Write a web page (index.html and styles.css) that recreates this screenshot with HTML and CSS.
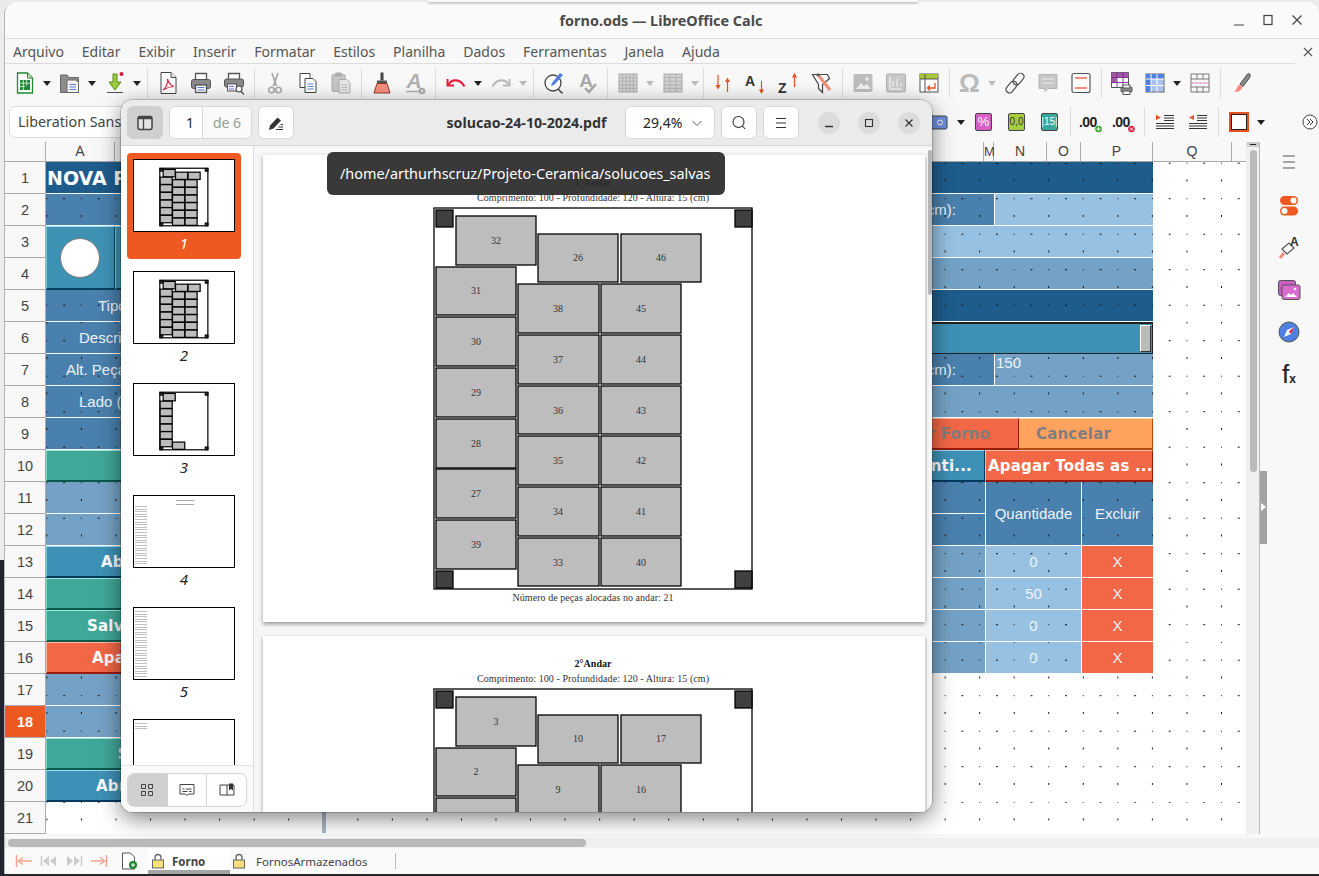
FILE: index.html
```html
<!DOCTYPE html>
<html lang="pt-BR">
<head>
    <meta charset="UTF-8">
    <meta name="viewport" content="width=device-width, initial-scale=1.0">
    <title>forno.ods - LibreOffice Calc</title>
    <link rel="stylesheet" href="styles.css">
</head>
<body>

    <!-- shared drawing of one kiln floor -->
    <svg class="defs" aria-hidden="true">
        <defs>
            <g id="frame"><rect x="171" y="53" width="318" height="381" fill="#fff"/>
                <rect x="173" y="55" width="17" height="17" fill="#404040"/><rect x="472" y="55" width="17" height="17" fill="#404040"/>
                <rect x="173" y="416" width="17" height="17" fill="#404040"/><rect x="472" y="416" width="17" height="17" fill="#404040"/>
            </g>
            <g id="left-col" fill="#bdbdbd">
                <rect x="193" y="61" width="80" height="49"/>
                <rect x="173" y="112" width="80" height="48"/><rect x="173" y="162" width="80" height="49"/>
                <rect x="173" y="213" width="80" height="49"/><rect x="173" y="264" width="80" height="49"/>
                <rect x="173" y="314" width="80" height="49"/><rect x="173" y="365" width="80" height="49"/>
            </g>
            <g id="floor">
                <use href="#frame"/><use href="#left-col"/>
                <g fill="#bdbdbd">
                    <rect x="275" y="79" width="80" height="48"/><rect x="358" y="79" width="80" height="48"/>
                    <rect x="255" y="129" width="81" height="49"/><rect x="338" y="129" width="80" height="49"/>
                    <rect x="255" y="180" width="81" height="49"/><rect x="338" y="180" width="80" height="49"/>
                    <rect x="255" y="231" width="81" height="48"/><rect x="338" y="231" width="80" height="48"/>
                    <rect x="255" y="281" width="81" height="49"/><rect x="338" y="281" width="80" height="49"/>
                    <rect x="255" y="332" width="81" height="49"/><rect x="338" y="332" width="80" height="49"/>
                    <rect x="255" y="383" width="81" height="48"/><rect x="338" y="383" width="80" height="48"/>
                </g>
            </g>
        </defs>
    </svg>

    <!-- Calc window -->
    <div class="calc">
        <div class="titlebar">
            <span class="titlebar-text">forno.ods — LibreOffice Calc</span>
            <div class="win-btns">
                <svg class="icon-sm" viewBox="0 0 16 16"><path d="M3 13h10" stroke="#444" stroke-width="1.2"/></svg>
                <svg class="icon-sm" viewBox="0 0 16 16"><rect x="4" y="3.5" width="8" height="9" fill="none" stroke="#444" stroke-width="1.2"/></svg>
                <svg class="icon-sm" viewBox="0 0 16 16"><path d="M3.5 3.5l9 9M12.5 3.5l-9 9" stroke="#444" stroke-width="1.2"/></svg>
            </div>
        </div>

        <div class="menubar">
            <span>Arquivo</span><span>Editar</span><span>Exibir</span><span>Inserir</span><span>Formatar</span><span>Estilos</span><span>Planilha</span><span>Dados</span><span>Ferramentas</span><span>Janela</span><span>Ajuda</span>
            <svg class="menu-close" viewBox="0 0 12 12"><path d="M2 2l8 8M10 2l-8 8" stroke="#555" stroke-width="1.1"/></svg>
        </div>

        <!-- Standard toolbar -->
        <div class="toolbar">
            <div class="tb"><svg viewBox="0 0 24 24"><path d="M4.5 2h10l5 5v15h-15z" fill="#fff" stroke="#1c8b2f" stroke-width="1.3"/><path d="M14.500 2v5h5" fill="#bfe3c5" stroke="#1c8b2f"/><path d="M7 9h10v10H7z" fill="#1c8b2f"/><path d="M7 12.200h10M7 15.500h10M10.300 9v10M13.600 9v10" stroke="#e6f5e8" stroke-width=".8"/><path d="M12 15h5v4h-5z" fill="#1c8b2f"/></svg></div>
            <div class="drop"></div>
            <div class="tb"><svg viewBox="0 0 24 24"><path d="M2.500 4h6.500l2 2.500h9.500v15h-18z" fill="#8d8d8d" stroke="#666"/><path d="M9 9h9l2.500 2.500v10H9z" fill="#f2f2f2" stroke="#666"/><path d="M11.500 13.500h6.500M11.500 16h6.500M11.500 18.500h6.500" stroke="#5b7fd6"/></svg></div>
            <div class="drop"></div>
            <div class="tb"><svg viewBox="0 0 24 24"><path d="M10 3h4v8h4l-6 8-6-8h4z" fill="#9ccc3c" stroke="#5a8a1a"/><path d="M4 21.500h16" stroke="#555" stroke-width="1.200"/><circle cx="18.500" cy="3" r="2" fill="#d8143c"/></svg></div>
            <div class="drop"></div>
            <div class="sep"></div>
            <div class="tb"><svg viewBox="0 0 24 24"><path d="M5 1.500h10l5 5v16H5z" fill="#fff" stroke="#444"/><path d="M15 1.500v5h5" fill="#eee" stroke="#444"/><path d="M7 19c3-2 5-7 4.500-11 1 4 3 6.500 6.500 7.500-4 0-7 1-11 3.500z" fill="none" stroke="#e0344f" stroke-width="1.200"/></svg></div>
            <div class="tb"><svg viewBox="0 0 24 24"><path d="M6.500 9V2.500h11V9" fill="#fff" stroke="#555" stroke-width="1.300"/><rect x="2.500" y="8.500" width="19" height="9" rx="2" fill="#8a8a8a" stroke="#555"/><rect x="6.500" y="14" width="11" height="7.500" fill="#fff" stroke="#555" stroke-width="1.300"/><path d="M8.500 16.500h7M8.500 19h7" stroke="#5b7fd6"/></svg></div>
            <div class="tb"><svg viewBox="0 0 24 24"><path d="M6.500 8V2.500h11V8" fill="#fff" stroke="#555" stroke-width="1.300"/><rect x="2.500" y="8" width="19" height="8" rx="2" fill="#8a8a8a" stroke="#555"/><rect x="5.500" y="13" width="9" height="7" fill="#fff" stroke="#555"/><path d="M7 15.500h5M7 18h5" stroke="#5b7fd6"/><circle cx="17" cy="18" r="3" fill="#fff" stroke="#555" stroke-width="1.200"/><path d="M19 20.500l3 3" stroke="#555" stroke-width="1.300"/></svg></div>
            <div class="sep"></div>
            <div class="tb"><svg viewBox="0 0 24 24"><path d="M9 2l4.500 13M15 2l-4.500 13" stroke="#aaa" stroke-width="1.800"/><circle cx="8.500" cy="19" r="2.700" fill="none" stroke="#aaa" stroke-width="1.600"/><circle cx="15.500" cy="19" r="2.700" fill="none" stroke="#aaa" stroke-width="1.600"/></svg></div>
            <div class="tb"><svg viewBox="0 0 24 24"><path d="M4 2.500h10v14H4z" fill="#fff" stroke="#444"/><path d="M9 7.500h8l3 3v11H9z" fill="#fff" stroke="#444"/><path d="M11.500 13h6M11.500 15.500h6M11.500 18h6" stroke="#5b7fd6"/></svg></div>
            <div class="tb"><svg viewBox="0 0 24 24"><rect x="3" y="3.500" width="13" height="17" rx="1.500" fill="#c5c5c5" stroke="#aaa"/><rect x="6.500" y="1.500" width="6" height="4" fill="#aaa"/><path d="M10 8.500h8l3 3v10.500H10z" fill="#e6e6e6" stroke="#aaa"/><path d="M12.500 14h6M12.500 16.500h6M12.500 19h6" stroke="#bbb"/></svg></div>
            <div class="sep"></div>
            <div class="tb"><svg viewBox="0 0 24 24"><path d="M10.500 1.500h3v8h-3z" fill="#444"/><path d="M7 9.500h10v3H7z" fill="#555"/><path d="M7 12.500h10l3 9.500H4z" fill="#f58f7c" stroke="#8a3a2b"/></svg></div>
            <div class="tb"><svg viewBox="0 0 24 24"><text x="11" y="17" class="glyph-a glyph-it" fill="#b0b0b0">A</text><path d="M3 20.500h14" stroke="#b0b0b0" stroke-width="1.500"/><circle cx="19" cy="20" r="3.300" fill="#aaa"/><path d="M17.700 18.700l2.600 2.600M20.300 18.700l-2.600 2.600" stroke="#fff" stroke-width=".8"/></svg></div>
            <div class="sep"></div>
            <div class="tb"><svg viewBox="0 0 24 24"><path d="M3.500 8v6.500H10" fill="none" stroke="#e8203c" stroke-width="2"/><path d="M4 14C8 7.500 16 7.500 20.500 15.500" fill="none" stroke="#e8203c" stroke-width="2.200"/></svg></div>
            <div class="drop"></div>
            <div class="tb"><svg viewBox="0 0 24 24"><path d="M20.500 8v6.500H14" fill="none" stroke="#bbb" stroke-width="2"/><path d="M20 14C16 7.500 8 7.500 3.500 15.500" fill="none" stroke="#bbb" stroke-width="2.200"/></svg></div>
            <div class="drop off"></div>
            <div class="sep"></div>
            <div class="tb"><svg viewBox="0 0 24 24"><circle cx="11" cy="12" r="8" fill="#fff" stroke="#444" stroke-width="1.300"/><path d="M16 18l4.500 4.500" stroke="#444" stroke-width="1.600"/><path d="M10 12l8-10 3 2-9 10-3 1z" fill="#4f7fe0"/></svg></div>
            <div class="tb"><svg viewBox="0 0 24 24"><text x="11" y="16" class="glyph-a" fill="#a8a8a8">A</text><path d="M10 17l4 4 7-8" fill="none" stroke="#a8a8a8" stroke-width="2.400"/></svg></div>
            <div class="sep"></div>
            <div class="tb"><svg viewBox="0 0 24 24"><rect x="3" y="3" width="18" height="18" fill="#d2d2d2" stroke="#aaa"/><path d="M6.600 3v18M10.200 3v18M13.800 3v18M17.400 3v18M3 6.600h18M3 10.200h18M3 13.800h18M3 17.400h18" stroke="#aaa" stroke-width=".8"/></svg></div>
            <div class="drop off"></div>
            <div class="tb"><svg viewBox="0 0 24 24"><rect x="3" y="3" width="18" height="18" fill="#d2d2d2" stroke="#aaa"/><path d="M9 3v18M15 3v18M3 6.600h18M3 10.200h18M3 13.800h18M3 17.400h18" stroke="#aaa" stroke-width=".8"/></svg></div>
            <div class="drop off"></div>
            <div class="sep tight"></div>
            <div class="tb"><svg viewBox="0 0 24 24"><path d="M7 4v11M16.500 10v11" stroke="#e8501f" stroke-width="1.200"/><path d="M4.500 14l2.500 4.500 2.500-4.500zM14 11l2.500-4.500 2.500 4.500z" fill="#e8501f"/></svg></div>
            <div class="tb"><svg viewBox="0 0 24 24"><text x="1" y="15" class="glyph-sort" fill="#333">A</text><path d="M17.500 10v10" stroke="#e8501f" stroke-width="1.200"/><path d="M15 18.500l2.500 4.500 2.500-4.500z" fill="#e8501f"/></svg></div>
            <div class="tb"><svg viewBox="0 0 24 24"><text x="1" y="22" class="glyph-sort" fill="#333">Z</text><path d="M17.500 5v11" stroke="#e8501f" stroke-width="1.200"/><path d="M15 6.500l2.500-4.500 2.500 4.500z" fill="#e8501f"/></svg></div>
            <div class="tb"><svg viewBox="0 0 24 24"><path d="M2.500 3.500h15l2 4-7 6v8l-4-4v-4z" fill="#fff" stroke="#444" stroke-width="1.200"/><path d="M9 5l11 14" stroke="#f58f7c" stroke-width="3"/><path d="M9 5l-2-2" stroke="#555" stroke-width="2.500"/></svg></div>
            <div class="sep"></div>
            <div class="tb"><svg viewBox="0 0 24 24"><rect x="2.500" y="3" width="19" height="18" rx="1.500" fill="#bdbdbd"/><path d="M5 18l5-6 3 3 3-2 4 5z" fill="#eee"/><circle cx="16" cy="8" r="1.800" fill="#eee"/></svg></div>
            <div class="tb"><svg viewBox="0 0 24 24"><rect x="2.500" y="3" width="19" height="18" rx="1.500" fill="#c9c9c9" stroke="#b0b0b0"/><path d="M6 6v12h12M9 16v-6M13 16v-8M17 16v-4" stroke="#eee" stroke-width="1.300" fill="none"/></svg></div>
            <div class="tb"><svg viewBox="0 0 24 24"><rect x="3" y="3" width="18" height="18" fill="#fff" stroke="#555"/><path d="M3 3h18v5H3z" fill="#a5c639"/><path d="M8 3v18M3 8h18" stroke="#555"/><path d="M18 12v5h-7m2-2.500L10.500 17l2.500 2.500" fill="none" stroke="#e8501f" stroke-width="1.300"/></svg></div>
            <div class="sep"></div>
            <div class="tb"><span class="omega">Ω</span></div>
            <div class="drop off"></div>
            <div class="tb"><svg viewBox="0 0 24 24"><g fill="none" stroke="#444" stroke-width="1.100"><rect x="12" y="1.500" width="7" height="13" rx="3.500" transform="rotate(40 15.500 8)"/><rect x="5" y="9.500" width="7" height="13" rx="3.500" transform="rotate(40 8.500 16)"/></g></svg></div>
            <div class="tb"><svg viewBox="0 0 24 24"><path d="M3 3.500h18v14H12l-3 3v-3H3z" fill="#c6c6c6" stroke="#b5b5b5"/><path d="M6 8h12M6 12h12" stroke="#eee"/></svg></div>
            <div class="tb"><svg viewBox="0 0 24 24"><rect x="3" y="2.500" width="18" height="19" rx="2" fill="#fff" stroke="#555" stroke-width="1.200"/><path d="M6 7h12M6 17h12" stroke="#f58f7c" stroke-width="2.200"/></svg></div>
            <div class="sep"></div>
            <div class="tb"><svg viewBox="0 0 24 24"><path d="M1.500 1.500h17v15h-17z" fill="#fff" stroke="#555"/><path d="M1.500 1.500h17v5h-17zM1.500 6.500h5v5h-5z" fill="#a05aa8"/><path d="M1.500 6.500h17M1.500 11.500h17M7 1.500v15M13 1.500v15" stroke="#7a2a8a" stroke-width=".9"/><rect x="11" y="16" width="11" height="5" rx="1" fill="#8a8a8a" stroke="#555"/><path d="M13 14h7v3h-7zM13 20h7v3.500h-7z" fill="#fff" stroke="#555"/></svg></div>
            <div class="tb"><svg viewBox="0 0 24 24"><rect x="3" y="3" width="18" height="18" fill="#a9c3f3" stroke="#666"/><path d="M3 3h18v5H3zM3 8h5v13H3z" fill="#4f7fe0"/><path d="M8 3v18M14 3v18M3 8h18M3 14.500h18" stroke="#fff"/></svg></div>
            <div class="drop"></div>
            <div class="tb"><svg viewBox="0 0 24 24"><path d="M3 3h18v18H3zM3 8h18M3 16h18M9 3v5M15 3v5M9 16v5M15 16v5" fill="none" stroke="#777"/><path d="M3 12h18" stroke="#d76cc0" stroke-dasharray="3 1"/></svg></div>
            <div class="sep"></div>
            <div class="tb"><svg viewBox="0 0 24 24"><path d="M20 2.500c2 1 1.500 3 0 5l-6 8-3-2.500 6-8c1-1.500 2-3 3-2.500z" fill="#888" stroke="#555"/><path d="M10.500 13.500l3 2.500c-1 3-4 5-8 5 2-1 2-6 5-7.500z" fill="#f58f7c"/></svg></div>
        </div>

        <!-- Formatting toolbar -->
        <div class="toolbar toolbar-format">
            <div class="font-box">Liberation Sans</div>
            <div class="spacer"></div>
            <div class="tb"><svg viewBox="0 0 24 24"><rect x="-1" y="6" width="21" height="13" rx="1.500" fill="#6d8fdc" stroke="#444"/><circle cx="13" cy="12.500" r="2.500" fill="none" stroke="#fff"/></svg></div>
            <div class="drop"></div>
            <div class="tb"><span class="num-chip chip-pink">%</span></div>
            <div class="tb"><span class="num-chip chip-lime">0,0</span></div>
            <div class="tb"><span class="num-chip chip-teal">|15|</span></div>
            <div class="sep"></div>
            <div class="tb"><svg viewBox="0 0 24 24"><text x="0" y="17" class="glyph-dec">.00</text><circle cx="19.500" cy="19" r="3.300" fill="#3aa82f"/><path d="M17.500 19h4M19.500 17v4" stroke="#fff"/></svg></div>
            <div class="tb"><svg viewBox="0 0 24 24"><text x="0" y="17" class="glyph-dec">.00</text><circle cx="19.500" cy="19" r="3.300" fill="#d8223c"/><path d="M18 17.500l3 3M21 17.500l-3 3" stroke="#fff"/></svg></div>
            <div class="sep"></div>
            <div class="tb"><svg viewBox="0 0 24 24"><path d="M11 5.500h10M11 8h10M11 10.500h10M3 13.500h18M3 16h18M3 18.500h18" stroke="#333"/><path d="M3 5l5 2.500L3 10z" fill="#e8501f"/></svg></div>
            <div class="tb"><svg viewBox="0 0 24 24"><path d="M11 5.500h10M11 8h10M11 10.500h10M3 13.500h18M3 16h18M3 18.500h18" stroke="#333"/><path d="M8 5L3 7.500 8 10z" fill="#e8501f"/></svg></div>
            <div class="sep"></div>
            <div class="tb"><span class="border-chip"></span></div>
            <div class="drop"></div>
            <div class="more"><svg viewBox="0 0 16 16"><circle cx="8" cy="8" r="7" fill="#fff" stroke="#444"/><path d="M5 5l3 3-3 3M8 5l3 3-3 3" fill="none" stroke="#333"/></svg></div>
        </div>

        <div class="workspace">
            <div class="sheet">
                <div class="col-heads">
                    <div></div><div>A</div><div></div><div class="squeeze">M</div><div>N</div><div>O</div><div>P</div><div>Q</div>
                </div>

                <div class="cells">
                    <div class="row-head">1</div>
                    <div class="cell fill-dark a-b title-cell">NOVA PEÇA</div>
                    <div class="cell fill-dark c-g dotted"></div>
                    <div class="cell q dotted"></div>

                    <div class="row-head">2</div>
                    <div class="cell fill-mid a-d dotted label-end">(cm):</div>
                    <div class="cell fill-light e-g dotted"></div>
                    <div class="cell q dotted"></div>

                    <div class="row-head">3</div>
                    <div class="cell btn-teal shape-cell"><span class="shape-circle"></span></div>
                    <div class="cell btn-teal shape-cell b-only"></div>
                    <div class="cell fill-light c-g dotted"></div>
                    <div class="cell q dotted"></div>

                    <div class="row-head">4</div>
                    <div class="cell fill-soft c-g dotted"></div>
                    <div class="cell q dotted"></div>

                    <div class="row-head">5</div>
                    <div class="cell fill-mid a-b dotted label i-52">Tipo de peça</div>
                    <div class="cell fill-dark c-g dotted"></div>
                    <div class="cell q dotted"></div>

                    <div class="row-head">6</div>
                    <div class="cell fill-mid a-b dotted label i-33">Descrição da peça</div>
                    <div class="cell c-g list-box"><span class="list-thumb"></span></div>
                    <div class="cell q dotted"></div>

                    <div class="row-head">7</div>
                    <div class="cell fill-mid a-b dotted label i-20">Alt. Peça Máxima</div>
                    <div class="cell fill-mid c-d dotted label-end">(cm):</div>
                    <div class="cell fill-soft e-g dotted value-top">150</div>
                    <div class="cell q dotted"></div>

                    <div class="row-head">8</div>
                    <div class="cell fill-mid a-b dotted label i-33">Lado (cm)</div>
                    <div class="cell fill-soft c-g dotted"></div>
                    <div class="cell q dotted"></div>

                    <div class="row-head">9</div>
                    <div class="cell fill-mid a-b dotted"></div>
                    <div class="cell btn-red c-e btn-end muted">Salvar Forno</div>
                    <div class="cell btn-orange f-g muted">Cancelar</div>
                    <div class="cell q dotted"></div>

                    <div class="row-head">10</div>
                    <div class="cell btn-green a-b"></div>
                    <div class="cell btn-blue c-only btn-tail">Alterar Quanti...</div>
                    <div class="cell btn-red d-g">Apagar Todas as ...</div>
                    <div class="cell q dotted"></div>

                    <div class="row-head">11</div>
                    <div class="cell fill-soft a-b dotted"></div>
                    <div class="cell fill-mid c-only dotted"></div>
                    <div class="cell fill-mid d-f two-rows dotted label-mid">Quantidade</div>
                    <div class="cell fill-mid g-only two-rows dotted label-mid">Excluir</div>
                    <div class="cell q dotted"></div>

                    <div class="row-head">12</div>
                    <div class="cell fill-soft a-b dotted"></div>
                    <div class="cell fill-mid c-only dotted"></div>
                    <div class="cell q dotted"></div>

                    <div class="row-head">13</div>
                    <div class="cell btn-blue a-b i-54">Abrir</div>
                    <div class="cell fill-soft c-only dotted"></div>
                    <div class="cell fill-light d-f dotted label-mid">0</div>
                    <div class="cell fill-red g-only label-mid">X</div>
                    <div class="cell q dotted"></div>

                    <div class="row-head">14</div>
                    <div class="cell btn-green a-b"></div>
                    <div class="cell fill-soft c-only dotted"></div>
                    <div class="cell fill-light d-f dotted label-mid">50</div>
                    <div class="cell fill-red g-only label-mid">X</div>
                    <div class="cell q dotted"></div>

                    <div class="row-head">15</div>
                    <div class="cell btn-green a-b i-40">Salvar</div>
                    <div class="cell fill-soft c-only dotted"></div>
                    <div class="cell fill-light d-f dotted label-mid">0</div>
                    <div class="cell fill-red g-only label-mid">X</div>
                    <div class="cell q dotted"></div>

                    <div class="row-head">16</div>
                    <div class="cell btn-red a-b i-45">Apagar</div>
                    <div class="cell fill-soft c-only dotted"></div>
                    <div class="cell fill-light d-f dotted label-mid">0</div>
                    <div class="cell fill-red g-only label-mid">X</div>
                    <div class="cell q dotted"></div>

                    <div class="row-head">17</div>
                    <div class="cell fill-soft a-b dotted"></div>
                    <div class="cell c-q dotted"></div>

                    <div class="row-head row-head-on">18</div>
                    <div class="cell fill-soft a-b dotted"></div>
                    <div class="cell c-q dotted"></div>

                    <div class="row-head">19</div>
                    <div class="cell btn-green a-b i-71">Salvar</div>
                    <div class="cell c-q dotted"></div>

                    <div class="row-head">20</div>
                    <div class="cell btn-blue a-b i-49">Abrir</div>
                    <div class="cell c-q dotted"></div>

                    <div class="row-head">21</div>
                    <div class="cell a-q dotted"><div class="stray-bar"></div></div>
                </div>
            </div>

            <div class="vscroll">
                <span class="vscroll-split"></span>
                <span class="vscroll-thumb"></span>
            </div>

            <div class="deck">
                <svg class="deck-icon" viewBox="0 0 24 24"><path d="M6 6h12M6 12h12M6 18h12" stroke="#555" stroke-width="1.100"/></svg>
                <svg class="deck-icon" viewBox="0 0 24 24"><rect x="3" y="2" width="18" height="9" rx="4.500" fill="#ee5921"/><circle cx="16.500" cy="6.500" r="3" fill="#fff"/><rect x="3" y="12.500" width="18" height="9" rx="4.500" fill="#ee5921"/><circle cx="7.500" cy="17" r="3" fill="#fff"/></svg>
                <svg class="deck-icon" viewBox="0 0 24 24"><path d="M5 13l7-6 5 5-7 6z" fill="#fff" stroke="#555" stroke-width="1.200"/><path d="M7 17l-4 5" stroke="#f58f7c" stroke-width="3"/><text x="13" y="10" class="glyph-deck">A</text></svg>
                <svg class="deck-icon" viewBox="0 0 24 24"><rect x="1.500" y="2.500" width="17" height="15" rx="2" fill="#c85cc0" stroke="#555"/><rect x="5" y="7" width="18" height="14.500" rx="2" fill="#d86cd0" stroke="#555"/><path d="M8 19l4-4 2 2 2-2 4 4z" fill="#fff"/><circle cx="18" cy="11" r="1.300" fill="#fff"/></svg>
                <svg class="deck-icon" viewBox="0 0 24 24"><circle cx="12" cy="12" r="10" fill="#4f7fe0" stroke="#555"/><path d="M7 17l3-7 7-3-3 7z" fill="#fff"/><path d="M12 11.500L17 7l-3 7z" fill="#e01b3c"/></svg>
                <div class="deck-fx">f<span>x</span></div>
                <div class="deck-handle"></div>
            </div>
        </div>

        <div class="hscroll"><span class="hscroll-thumb"></span></div>

        <div class="tabs">
            <svg class="nav" viewBox="0 0 18 12"><path d="M1.500 0v12M17 6H4m4-3.500L3.500 6 8 9.500" fill="none" stroke="#f5a48f" stroke-width="1.500"/></svg>
            <svg class="nav" viewBox="0 0 18 12"><path d="M1.500 1v10" stroke="#ccc" stroke-width="1.500"/><path d="M9 1L3 6l6 5zM16 1l-6 5 6 5z" fill="#ccc"/></svg>
            <svg class="nav" viewBox="0 0 18 12"><path d="M16.500 1v10" stroke="#ccc" stroke-width="1.500"/><path d="M9 1l6 5-6 5zM2 1l6 5-6 5z" fill="#ccc"/></svg>
            <svg class="nav" viewBox="0 0 18 12"><path d="M16.500 0v12M1 6h13m-4-3.500L14.500 6 10 9.500" fill="none" stroke="#f5a48f" stroke-width="1.500"/></svg>
            <svg class="new-sheet" viewBox="0 0 18 18"><path d="M2.500 1h8l4 4v12h-12z" fill="#fff" stroke="#555"/><circle cx="13" cy="13" r="4" fill="#1c8b2f"/><path d="M11 13h4M13 11v4" stroke="#fff"/></svg>
            <div class="tab tab-on">
                <svg class="lock" viewBox="0 0 14 16"><path d="M4 7V4.500a3 3 0 016 0V7" fill="none" stroke="#666" stroke-width="1.300"/><rect x="1.500" y="7" width="11" height="8" fill="#f8df7c" stroke="#666"/></svg>
                Forno
            </div>
            <div class="tab tab-next">
                <svg class="lock" viewBox="0 0 14 16"><path d="M4 7V4.500a3 3 0 016 0V7" fill="none" stroke="#666" stroke-width="1.300"/><rect x="1.500" y="7" width="11" height="8" fill="#f8df7c" stroke="#666"/></svg>
                FornosArmazenados
            </div>
            <div class="tab-end"></div>
        </div>
    </div>

    <!-- bottom edge of the window behind -->
    <div class="behind"></div>

    <!-- PDF viewer window -->
    <div class="pdf">
        <div class="pdf-head">
            <button class="hb hb-on"><svg viewBox="0 0 16 16"><rect x="1" y="1.500" width="14" height="13" rx="2" fill="#e4e4e4" stroke="#444" stroke-width="1.500"/><path d="M1 3h14" stroke="#444" stroke-width="2.500"/><path d="M6.500 2v12" stroke="#444" stroke-width="1.300"/></svg></button>
            <div class="page-box"><span class="page-num">1</span><span class="page-total">de 6</span></div>
            <button class="hb"><svg viewBox="0 0 16 16"><path d="M1 15l1-4.500L9.500 2.500l3.500 3-7.500 8z" fill="#333"/><path d="M8 14.500h7M10.500 12h4.500M12.500 9.500h2.500" stroke="#333"/></svg></button>
            <div class="pdf-title">solucao-24-10-2024.pdf</div>
            <div class="zoom-box"><span>29,4%</span><svg viewBox="0 0 12 12"><path d="M1.500 4l4.500 4.500L10.500 4" fill="none" stroke="#555"/></svg></div>
            <button class="hb"><svg viewBox="0 0 16 16"><circle cx="7.500" cy="7" r="5.500" fill="none" stroke="#333" stroke-width="1.100"/><path d="M11.500 11l2.500 3" stroke="#333" stroke-width="1.100"/></svg></button>
            <button class="hb"><svg viewBox="0 0 16 16"><path d="M3 3.500h10M3 8h10M3 12.500h10" stroke="#333"/></svg></button>
            <div class="pdf-win">
                <span class="round"><svg viewBox="0 0 12 12"><path d="M2 9.500h8" stroke="#333" stroke-width="1.300"/></svg></span>
                <span class="round"><svg viewBox="0 0 12 12"><rect x="2.500" y="2.500" width="7" height="7" fill="none" stroke="#333" stroke-width="1.100"/></svg></span>
                <span class="round"><svg viewBox="0 0 12 12"><path d="M2.500 2.500l7 7M9.500 2.500l-7 7" stroke="#333" stroke-width="1.200"/></svg></span>
            </div>
        </div>

        <div class="pdf-body">
            <div class="pdf-side">
                <div class="thumbs">
                    <div class="thumb thumb-on">
                        <div class="thumb-page"><svg class="thumb-svg" viewBox="0 0 662 467"><use href="#floor"/></svg></div>
                        <span>1</span>
                    </div>
                    <div class="thumb">
                        <div class="thumb-page"><svg class="thumb-svg" viewBox="0 0 662 467"><use href="#floor"/></svg></div>
                        <span>2</span>
                    </div>
                    <div class="thumb">
                        <div class="thumb-page"><svg class="thumb-svg" viewBox="0 0 662 467"><use href="#frame"/><use href="#left-col"/><rect x="255" y="383" width="81" height="48" fill="#bdbdbd"/></svg></div>
                        <span>3</span>
                    </div>
                    <div class="thumb">
                        <div class="thumb-page page-text"><i class="text-head"></i><i class="text-lines"></i></div>
                        <span>4</span>
                    </div>
                    <div class="thumb">
                        <div class="thumb-page page-text"><i class="text-lines full"></i></div>
                        <span>5</span>
                    </div>
                    <div class="thumb">
                        <div class="thumb-page page-text"><i class="text-lines short"></i></div>
                    </div>
                </div>
                <div class="side-tabs">
                    <div class="seg seg-wrap">
                        <span class="seg-on"><svg viewBox="0 0 16 16"><path d="M2.500 2.500h4v4h-4zM9.500 2.500h4v4h-4zM2.500 9.500h4v4h-4zM9.500 9.500h4v4h-4z" fill="none" stroke="#444"/></svg></span>
                        <span><svg viewBox="0 0 16 16"><path d="M1 2.500h14v9.500H9.500L8 13.500 6.500 12H1z" fill="none" stroke="#444"/><path d="M3.500 7h2M7 7h5.500M3.500 9.500h5M10 9.500h2.500" stroke="#444"/></svg></span>
                        <span><svg viewBox="0 0 16 16"><path d="M1 3h14v10H1zM8 3v10" fill="none" stroke="#444"/><path d="M10 1.500h4v7l-2-1.500-2 1.500z" fill="#333"/></svg></span>
                    </div>
                </div>
            </div>

            <div class="pdf-main">
                <svg class="pdf-page" viewBox="0 0 662 467">
                    <use href="#floor" class="floor-lines"/>
                    <text class="page-h" x="330" y="31">1°Andar</text>
                    <text class="page-t" x="330" y="46" textLength="232">Comprimento: 100 - Profundidade: 120 - Altura: 15 (cm)</text>
                    <text class="page-t" x="330" y="446" textLength="161">Número de peças alocadas no andar: 21</text>
                    <text class="pn" x="233" y="89">32</text><text class="pn" x="315" y="106">26</text><text class="pn" x="398" y="106">46</text>
                    <text class="pn" x="213" y="139">31</text><text class="pn" x="295" y="157">38</text><text class="pn" x="378" y="157">45</text>
                    <text class="pn" x="213" y="190">30</text><text class="pn" x="295" y="208">37</text><text class="pn" x="378" y="208">44</text>
                    <text class="pn" x="213" y="241">29</text><text class="pn" x="295" y="259">36</text><text class="pn" x="378" y="259">43</text>
                    <text class="pn" x="213" y="292">28</text><text class="pn" x="295" y="309">35</text><text class="pn" x="378" y="309">42</text>
                    <text class="pn" x="213" y="342">27</text><text class="pn" x="295" y="360">34</text><text class="pn" x="378" y="360">41</text>
                    <text class="pn" x="213" y="393">39</text><text class="pn" x="295" y="411">33</text><text class="pn" x="378" y="411">40</text>
                </svg>
                <svg class="pdf-page" viewBox="0 0 662 467">
                    <use href="#floor" class="floor-lines"/>
                    <text class="page-h" x="330" y="31">2°Andar</text>
                    <text class="page-t" x="330" y="46" textLength="232">Comprimento: 100 - Profundidade: 120 - Altura: 15 (cm)</text>
                    <text class="pn" x="233" y="89">3</text><text class="pn" x="315" y="106">10</text><text class="pn" x="398" y="106">17</text>
                    <text class="pn" x="213" y="139">2</text><text class="pn" x="295" y="157">9</text><text class="pn" x="378" y="157">16</text>
                </svg>
                <span class="pdf-scroll"></span>
            </div>
        </div>

        <div class="tooltip">/home/arthurhscruz/Projeto-Ceramica/solucoes_salvas</div>
    </div>

</body>
</html>
```

FILE: styles.css
```css
/* Basic Reset */
* {
    margin: 0;
    padding: 0;
    box-sizing: border-box;
}

body {
    width: 1319px;
    height: 876px;
    overflow: hidden;
    position: relative;
    font-family: 'Noto Sans', sans-serif;
    background: linear-gradient(#ececec 560px, #22242e 560px);
}

.defs {
    position: absolute;
    width: 0;
    height: 0;
}

.behind {
    position: absolute;
    left: 428px;
    top: 0;
    width: 490px;
    height: 2px;
    background: #fafafa;
    box-shadow: 0 1px 3px rgba(0, 0, 0, 0.4);
}

/* Calc window */
.calc {
    position: absolute;
    left: 4px;
    top: 2px;
    width: 1315px;
    height: 872px;
    display: flex;
    flex-direction: column;
    background: #f8f8f8;
    border-left: 1px solid #b5b5b5;
    border-radius: 12px 12px 0 0;
    overflow: hidden;
}

.titlebar {
    height: 37px;
    flex: none;
    display: flex;
    align-items: center;
    justify-content: center;
    position: relative;
    border-bottom: 1px solid #ddd;
    background: #fafafa;
}

.titlebar-text {
    font-size: 14.4px;
    font-weight: 700;
    color: #4a4a4a;
    margin-left: -2px;
}

.win-btns {
    position: absolute;
    right: 14px;
    top: 10px;
    display: flex;
    gap: 13px;
}

.icon-sm {
    width: 16px;
    height: 16px;
}

.menubar {
    height: 25px;
    flex: none;
    display: flex;
    align-items: center;
    gap: 17.9px;
    padding-left: 8px;
    font-size: 14px;
    color: #555;
    border-bottom: 1px solid #ddd;
    margin-right: 24px;
    position: relative;
}

.menu-close {
    position: absolute;
    right: -19px;
    top: 7px;
    width: 12px;
    height: 12px;
}

.toolbar {
    height: 37px;
    flex: none;
    display: flex;
    align-items: center;
    padding-left: 3px;
}

.toolbar-format {
    height: 41px;
}

.tb {
    width: 33px;
    height: 26px;
    flex: none;
    display: flex;
    align-items: center;
    justify-content: center;
}

.tb svg {
    width: 24px;
    height: 24px;
    overflow: visible;
}

.drop {
    width: 12px;
    height: 26px;
    flex: none;
    position: relative;
}

.drop::after {
    content: "";
    position: absolute;
    left: 2px;
    top: 11px;
    border: 4px solid transparent;
    border-top: 5px solid #222;
    border-bottom: 0;
}

.drop.off::after {
    border-top-color: #bbb;
}

.sep {
    width: 8px;
    height: 30px;
    flex: none;
    position: relative;
}

.sep::after {
    content: "";
    position: absolute;
    left: 4px;
    top: 0;
    bottom: 0;
    border-left: 1px solid #ddd;
}

.sep.tight {
    width: 5px;
}

.sep.tight::after {
    left: 2px;
}

.spacer {
    flex: 1;
}

.font-box {
    width: 150px;
    height: 32px;
    margin-left: 1px;
    padding-left: 8px;
    line-height: 30px;
    font-size: 14.3px;
    color: #444;
    background: #fff;
    border: 1px solid #ddd;
    border-radius: 6px;
}

.more {
    width: 19px;
    margin-left: 33px;
    flex: none;
}

.more svg {
    display: block;
    width: 16px;
    height: 16px;
    margin-left: 2px;
}

.glyph-a {
    font: 700 19px 'Liberation Sans', sans-serif;
    text-anchor: middle;
}

.glyph-it {
    font-style: italic;
    font-size: 21px;
}

.glyph-sort {
    font: 700 14px 'Liberation Sans', sans-serif;
}

.glyph-dec {
    font: 700 14px 'Liberation Sans', sans-serif;
    fill: #222;
    letter-spacing: -0.6px;
}

.glyph-deck {
    font: 700 12px 'Liberation Sans', sans-serif;
    fill: #333;
}

.omega {
    font: 700 26px 'Liberation Sans', sans-serif;
    color: #bbb;
    line-height: 26px;
}

.num-chip {
    width: 17px;
    height: 18px;
    display: flex;
    align-items: center;
    justify-content: center;
    font: 10px 'Liberation Sans', sans-serif;
    border: 1px solid #444;
    border-radius: 2px;
    white-space: nowrap;
    overflow: hidden;
}

.chip-pink {
    background: #d95fc7;
    color: #fff;
    font-size: 13px;
}

.chip-lime {
    background: #a4cc3e;
    color: #333;
}

.chip-teal {
    background: #3aa89c;
    color: #fff;
}

.border-chip {
    width: 20px;
    height: 20px;
    background: #fff;
    border: 2px solid #e8501f;
    outline: 1px solid #222;
    outline-offset: -3px;
}

/* Sheet */
.workspace {
    flex: 1;
    display: flex;
    min-height: 0;
}

.sheet {
    width: 1241px;
    flex: none;
    background: #fff;
    overflow: hidden;
}

.col-heads {
    height: 20px;
    display: grid;
    grid-template-columns: 41px 69px 869px 10px 53px 34px 72px 79px 14px;
    font: 14px 'Liberation Sans', sans-serif;
    color: #444;
    background: #f8f8f8;
    border-bottom: 1px solid #aaa;
}

.col-heads div {
    text-align: center;
    line-height: 19px;
    border-right: 1px solid #aaa;
}

.col-heads .squeeze {
    font-size: 13px;
    letter-spacing: -1px;
}

.cells {
    display: grid;
    grid-template-columns: 41px 69px 119px 751px 10px 24px 62px 72px 93px;
    grid-auto-rows: 32px;
    font: 15px 'Liberation Sans', sans-serif;
    color: #eef4f9;
}

.row-head {
    grid-column: 1;
    display: flex;
    align-items: center;
    justify-content: center;
    color: #444;
    font-size: 14.5px;
    background: #f8f8f8;
    border-right: 1px solid #aaa;
    border-bottom: 1px solid #aaa;
}

.row-head-on {
    background: #ee5921;
    color: #fff;
    font-weight: 700;
}

.cell {
    display: flex;
    align-items: center;
    border-bottom: 1px solid #fff;
    overflow: hidden;
    white-space: nowrap;
    min-width: 0;
}

/* spans of the sheet columns */
.a-d { grid-column: 2 / 6; }
.a-b { grid-column: 2 / 4; }
.a-q { grid-column: 2 / 10; }
.b-only { grid-column: 3; }
.c-g { grid-column: 4 / 9; }
.c-d { grid-column: 4 / 6; }
.c-e { grid-column: 4 / 7; }
.c-q { grid-column: 4 / 10; }
.c-only { grid-column: 4; }
.d-f { grid-column: 5 / 8; }
.d-g { grid-column: 5 / 9; padding-left: 2px; }
.e-g { grid-column: 6 / 9; }
.f-g { grid-column: 7 / 9; }
.g-only { grid-column: 8; }
.q { grid-column: 9; }

.two-rows {
    grid-row: span 2;
}

.shape-cell {
    grid-row: span 2;
    grid-column: 2;
    justify-content: center;
}

.shape-cell.b-only {
    grid-column: 3;
}

.fill-dark { background-color: #1e5c8c; }
.fill-mid { background-color: #4a80ad; }
.fill-soft { background-color: #74a2c6; }
.fill-light { background-color: #97c1e2; }
.fill-red { background-color: #f26746; }

/* page grid points of Calc */
.dotted {
    background-image:
        radial-gradient(circle at 12.4px 3px, #111 0.72px, transparent 0.73px),
        radial-gradient(circle at 12.4px 21px, #111 0.72px, transparent 0.73px),
        radial-gradient(circle at 29.7px 21px, #111 0.72px, transparent 0.73px);
    background-size: 34.55px 35.5px;
    background-attachment: fixed;
}

.title-cell {
    font: 700 19px 'DejaVu Sans', sans-serif;
    color: #fff;
    padding-left: 1px;
}

.label-end {
    justify-content: flex-end;
    padding-right: 38px;
    border-right: 1px solid #fff;
}

.label-mid {
    justify-content: center;
    border-left: 1px solid #fff;
}

.value-top {
    align-items: flex-start;
    padding-left: 1px;
    line-height: 17px;
}

.i-20 { padding-left: 20px; }
.i-33 { padding-left: 33px; }
.i-40 { padding-left: 40px; }
.i-45 { padding-left: 45px; }
.i-49 { padding-left: 49px; }
.i-52 { padding-left: 52px; }
.i-54 { padding-left: 54px; }
.i-71 { padding-left: 71px; }

.btn-teal,
.btn-green,
.btn-blue,
.btn-red,
.btn-orange {
    font: 700 15px 'DejaVu Sans', sans-serif;
    letter-spacing: 0.2px;
    color: #fff;
    border-bottom-width: 2px;
    border-bottom-style: solid;
    border-top: 1px solid transparent;
}

.btn-teal {
    background: #3e93b5;
    border-top-color: #9fdcf0;
    border-left: 1px solid #7cc6dc;
    border-right: 1px solid #07425f;
    border-bottom-color: #07425f;
}

.btn-green {
    background: #40a898;
    border-top-color: #9fe8dc;
    border-left: 1px solid #7fd8c8;
    border-bottom-color: #0a5a4c;
}

.btn-blue {
    background: #3e91b6;
    border-top-color: #9fdcf0;
    border-left: 1px solid #7cc6dc;
    border-bottom-color: #033a5f;
}

.btn-red {
    background: #f26746;
    border-top-color: #f9b9a8;
    border-left: 1px solid #f9b9a8;
    border-right: 1px solid #9a1a06;
    border-bottom-color: #9a1a06;
}

.btn-orange {
    background: #ffa25d;
    border-top-color: #ffe0b8;
    border-right: 1px solid #b34f0a;
    border-bottom-color: #b34f0a;
    justify-content: center;
    padding-right: 24px;
}

.btn-end {
    justify-content: flex-end;
    padding-right: 28px;
}

.btn-tail {
    justify-content: flex-end;
    padding-right: 12px;
    border-right: 1px solid #033a5f;
}

.muted {
    color: #7f7f7f;
}

.shape-circle {
    width: 40px;
    height: 40px;
    border-radius: 50%;
    background: #fff;
    border: 1px solid #777;
    margin-left: -2px;
}

.list-box {
    background: #3e91b5;
    border: 1px solid #222;
    border-width: 2px 1px 1px;
    justify-content: flex-end;
    padding-right: 1px;
}

.list-thumb {
    width: 11px;
    height: 27px;
    background: #bbb;
    border: 1px solid #fff;
    border-right-color: #333;
    border-bottom-color: #333;
}

.stray-bar {
    width: 4px;
    height: 32px;
    margin-left: 276px;
    background: #a9b7c6;
}

.vscroll {
    width: 14px;
    flex: none;
    position: relative;
    background: #f0f0f0;
    border-right: 1px solid #bbb;
}

.vscroll-split {
    position: absolute;
    left: 1px;
    top: 0;
    width: 12px;
    height: 5px;
    background: #ccc;
}

.vscroll-split::after {
    content: "";
    position: absolute;
    left: 3px;
    top: 2px;
    width: 6px;
    height: 1px;
    background: #222;
}

.vscroll-thumb {
    position: absolute;
    left: 4px;
    top: 8px;
    width: 7px;
    height: 322px;
    background: #bbb;
    border-radius: 4px;
}

.deck {
    flex: 1;
    position: relative;
    display: flex;
    flex-direction: column;
    align-items: center;
    gap: 18px;
    padding-top: 8px;
    padding-right: 1px;
    background: #f8f8f8;
}

.deck-icon {
    width: 24px;
    height: 24px;
    flex: none;
}

.deck-icon:first-child {
    margin-bottom: 2px;
}

.deck-fx {
    font: 26px 'Liberation Sans', sans-serif;
    line-height: 24px;
    color: #222;
}

.deck-fx span {
    font-size: 12px;
    font-weight: 700;
}

.deck-handle {
    position: absolute;
    left: 0;
    top: 329px;
    width: 7px;
    height: 73px;
    background: #a3a3a3;
}

.deck-handle::after {
    content: "";
    position: absolute;
    left: 1px;
    top: 32px;
    border: 4px solid transparent;
    border-left: 5px solid #fff;
    border-right: 0;
}

.hscroll {
    height: 10px;
    flex: none;
    margin-top: 4px;
    padding: 1px 0 1px 3px;
    background: #f0f0f0;
}

.hscroll-thumb {
    display: block;
    width: 578px;
    height: 8px;
    background: #b9b9b9;
    border-radius: 4px;
}

.tabs {
    height: 26px;
    flex: none;
    display: flex;
    align-items: center;
    padding-left: 10px;
    background: #fafafa;
    font-size: 11.5px;
    color: #444;
}

.nav {
    width: 18px;
    height: 12px;
    margin-right: 7px;
}

.new-sheet {
    width: 18px;
    height: 18px;
    margin: 0 10px 0 5px;
}

.tab {
    height: 26px;
    display: flex;
    align-items: center;
    gap: 7px;
    padding: 0 27px 0 8px;
    white-space: nowrap;
}

.tab-on {
    font-weight: 700;
    background: #fff;
    border-bottom: 4px solid #a5a5a5;
    padding: 4px 0 0 3px;
    width: 82px;
}

.tab-next {
    padding-left: 2px;
    gap: 10px;
}

.tab-end {
    height: 16px;
    border-left: 1px solid #bbb;
}

.lock {
    width: 14px;
    height: 16px;
    flex: none;
}

/* PDF viewer window */
.pdf {
    position: absolute;
    left: 121px;
    top: 100px;
    width: 811px;
    height: 712px;
    display: flex;
    flex-direction: column;
    background: #fff;
    border-radius: 12px;
    box-shadow: 0 6px 22px rgba(0, 0, 0, 0.5), 0 0 0 1px rgba(0, 0, 0, 0.18);
    overflow: hidden;
}

.pdf-head {
    height: 46px;
    flex: none;
    display: flex;
    align-items: center;
    gap: 6px;
    padding: 0 12px 0 6px;
    background: #ebebeb;
    border-bottom: 1px solid #d5d5d5;
}

.hb {
    width: 36px;
    height: 33px;
    flex: none;
    display: flex;
    align-items: center;
    justify-content: center;
    background: #fff;
    border: 1px solid #d8d8d8;
    border-radius: 6px;
}

.hb svg {
    width: 16px;
    height: 16px;
}

.hb-on {
    background: #d0d0d0;
    border-color: #d0d0d0;
}

.page-box {
    width: 83px;
    height: 33px;
    flex: none;
    display: flex;
    font-size: 14px;
    line-height: 31px;
    background: #fafafa;
    border: 1px solid #d8d8d8;
    border-radius: 6px;
    overflow: hidden;
}

.page-num {
    width: 33px;
    padding-right: 8px;
    text-align: right;
    color: #222;
    background: #fff;
    border-right: 1px solid #d8d8d8;
}

.page-total {
    flex: 1;
    text-align: center;
    color: #999;
}

.pdf-title {
    flex: 1;
    padding-left: 134px;
    text-align: center;
    font-size: 14.2px;
    font-weight: 700;
    color: #333;
}

.zoom-box {
    width: 90px;
    height: 33px;
    flex: none;
    display: flex;
    align-items: center;
    justify-content: space-between;
    padding: 0 11px 0 17px;
    font-size: 14px;
    color: #222;
    background: #fff;
    border: 1px solid #d8d8d8;
    border-radius: 6px;
}

.zoom-box svg {
    width: 12px;
    height: 12px;
}

.pdf-win {
    display: flex;
    gap: 18px;
    margin-left: 13px;
}

.round {
    width: 22px;
    height: 22px;
    display: flex;
    align-items: center;
    justify-content: center;
    border-radius: 50%;
    background: #dcdcdc;
}

.round svg {
    width: 12px;
    height: 12px;
}

.pdf-body {
    flex: 1;
    display: flex;
    min-height: 0;
}

.pdf-side {
    width: 133px;
    flex: none;
    display: flex;
    flex-direction: column;
    background: #fff;
    border-right: 1px solid #ddd;
}

.thumbs {
    flex: 1;
    min-height: 0;
    overflow: hidden;
    padding: 7px 0 0 6px;
}

.thumb {
    width: 114px;
    height: 106px;
    margin-bottom: 6px;
    padding-top: 6px;
    text-align: center;
    font-size: 15px;
    font-style: italic;
    line-height: 23px;
    color: #222;
    border-radius: 4px;
}

.thumb-on {
    background: #ee5921;
    color: #fff;
}

.thumb-page {
    width: 102px;
    height: 73px;
    margin: 0 auto;
    background: #fff;
    border: 1px solid #000;
    position: relative;
}

.thumb-svg {
    display: block;
    width: 100px;
    height: 71px;
    stroke: #000;
    stroke-width: 8px;
}

.page-text i {
    display: block;
    position: absolute;
    left: 1px;
}

.text-head {
    left: 42px !important;
    top: 4px;
    width: 18px;
    height: 6px;
    background: repeating-linear-gradient(#aaa 0 1px, transparent 1px 4px);
}

.text-lines {
    top: 10px;
    width: 12px;
    height: 60px;
    background: repeating-linear-gradient(#c0c0c0 0 1px, transparent 1px 2.6px);
}

.text-lines.full {
    top: 3px;
    height: 67px;
}

.text-lines.short {
    top: 3px;
    height: 8px;
}

.side-tabs {
    height: 47px;
    flex: none;
    padding: 7px 0 0 6px;
    background: #fafafa;
    border-top: 1px solid #e4e4e4;
}

.seg {
    width: 120px;
    height: 34px;
    display: flex;
    background: #fff;
    border: 1px solid #d4d4d4;
    border-radius: 7px;
    overflow: hidden;
}

.seg span {
    flex: 1;
    display: flex;
    align-items: center;
    justify-content: center;
    border-right: 1px solid #d4d4d4;
}

.seg span:last-child {
    border-right: 0;
}

.seg-on {
    background: #d0d0d0;
}

.seg svg {
    width: 16px;
    height: 16px;
}

.pdf-main {
    flex: 1;
    position: relative;
    min-width: 0;
    padding: 9px 0 0 9px;
    background: #f6f6f6;
    overflow: hidden;
}

.pdf-page {
    display: block;
    width: 662px;
    height: 467px;
    flex: none;
    margin-bottom: 14px;
    background: #fff;
    box-shadow: 0 2px 4px rgba(0, 0, 0, 0.4);
    overflow: hidden;
}

.floor-lines {
    stroke: #000;
    stroke-width: 1.3px;
}

.pn,
.page-h,
.page-t {
    font-family: 'Liberation Serif', serif;
    text-anchor: middle;
    stroke: none;
}

.pn {
    font-size: 10px;
    fill: #333;
}

.page-h {
    font-size: 10px;
    font-weight: 700;
    fill: #111;
}

.page-t {
    font-size: 10px;
    fill: #333;
}

.pdf-scroll {
    position: absolute;
    right: 0;
    top: 4px;
    width: 4px;
    height: 145px;
    background: #b5b5b5;
    border-radius: 2px;
}

.tooltip {
    position: absolute;
    left: 206px;
    top: 52px;
    width: 398px;
    height: 43px;
    padding-left: 13px;
    line-height: 43px;
    font-size: 14.4px;
    color: #fff;
    background: rgba(45, 45, 45, 0.94);
    border-radius: 6px;
    white-space: nowrap;
}
```
